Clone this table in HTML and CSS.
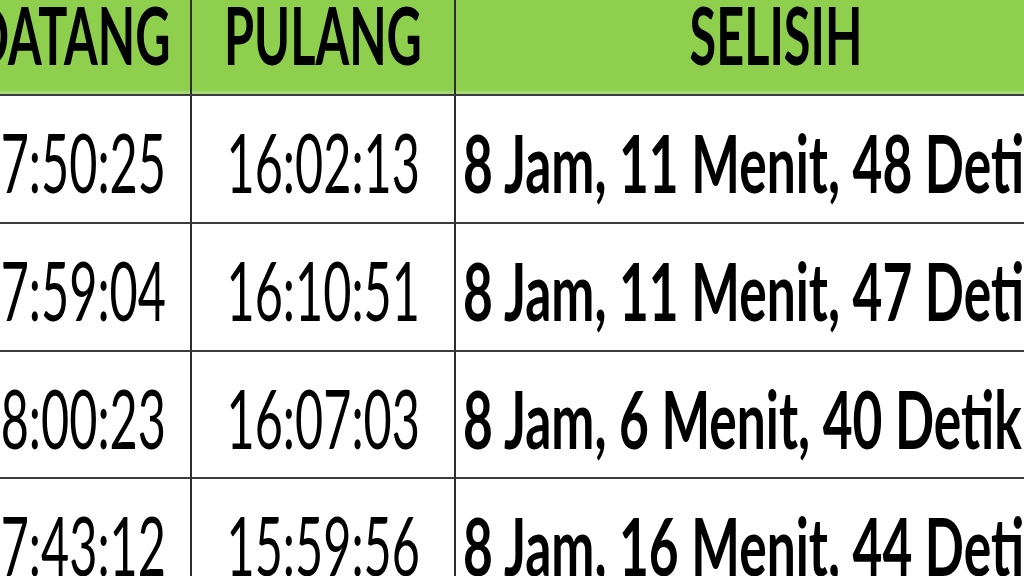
FILE: index.html
```html
<!DOCTYPE html>
<html lang="id">
<head>
<meta charset="utf-8">
<title>Selisih Jam</title>
<link rel="stylesheet" href="styles.css">
</head>
<body>
<div class="sheet">
  <div class="cell head c1"><span class="txt">DATANG</span></div>
  <div class="cell head c2"><span class="txt">PULANG</span></div>
  <div class="cell head c3"><span class="txt">SELISIH</span></div>

  <div class="cell time c1"><span class="txt">07:50:25</span></div>
  <div class="cell time c2"><span class="txt">16:02:13</span></div>
  <div class="cell diff c3"><span class="txt">8 Jam, 11 Menit, 48 Detik</span></div>

  <div class="cell time c1"><span class="txt">07:59:04</span></div>
  <div class="cell time c2"><span class="txt">16:10:51</span></div>
  <div class="cell diff c3"><span class="txt">8 Jam, 11 Menit, 47 Detik</span></div>

  <div class="cell time c1"><span class="txt">08:00:23</span></div>
  <div class="cell time c2"><span class="txt">16:07:03</span></div>
  <div class="cell diff c3"><span class="txt">8 Jam, 6 Menit, 40 Detik</span></div>

  <div class="cell time c1 last"><span class="txt">07:43:12</span></div>
  <div class="cell time c2 last"><span class="txt">15:59:56</span></div>
  <div class="cell diff c3 last"><span class="txt">8 Jam, 16 Menit, 44 Detik</span></div>
</div>
</body>
</html>
```

FILE: styles.css
```css
html, body {
  margin: 0;
  padding: 0;
  background: #ffffff;
  overflow: hidden;
  width: 1024px;
  height: 576px;
}

.sheet {
  display: grid;
  grid-template-columns: 247px 264px 640px;
  grid-template-rows: 96px 128px 128px 127px 128px;
  margin-left: -55px;
  font-family: Lato, "Liberation Sans", sans-serif;
  font-size: 81px;
  line-height: 81px;
  color: #000000;
}

.cell {
  display: flex;
  overflow: hidden;
  white-space: nowrap;
  border-bottom: 2px solid #3c3c3c;
  box-sizing: border-box;
}

.c1, .c2 {
  border-right: 2px solid #2e2e2e;
}

.last {
  border-bottom: none;
}

.head {
  background: #8fcf4e;
  font-weight: 700;
  line-height: 60px;
  align-items: flex-start;
  justify-content: center;
  padding-top: 4px;
  box-shadow: inset 0 -3px 0 #a6d97a;
}

.head.c1 {
  padding-left: 8px;
}

.time, .diff {
  align-items: flex-start;
  padding-top: 25px;
}

.time {
  justify-content: center;
}

.time.c1 {
  padding-left: 4px;
}

.diff {
  justify-content: flex-start;
  padding-left: 7px;
  font-weight: 700;
}

.txt {
  display: inline-block;
  transform: scaleX(0.6);
  transform-origin: center;
}

.diff .txt {
  transform: scaleX(0.636);
  transform-origin: left;
}
```
